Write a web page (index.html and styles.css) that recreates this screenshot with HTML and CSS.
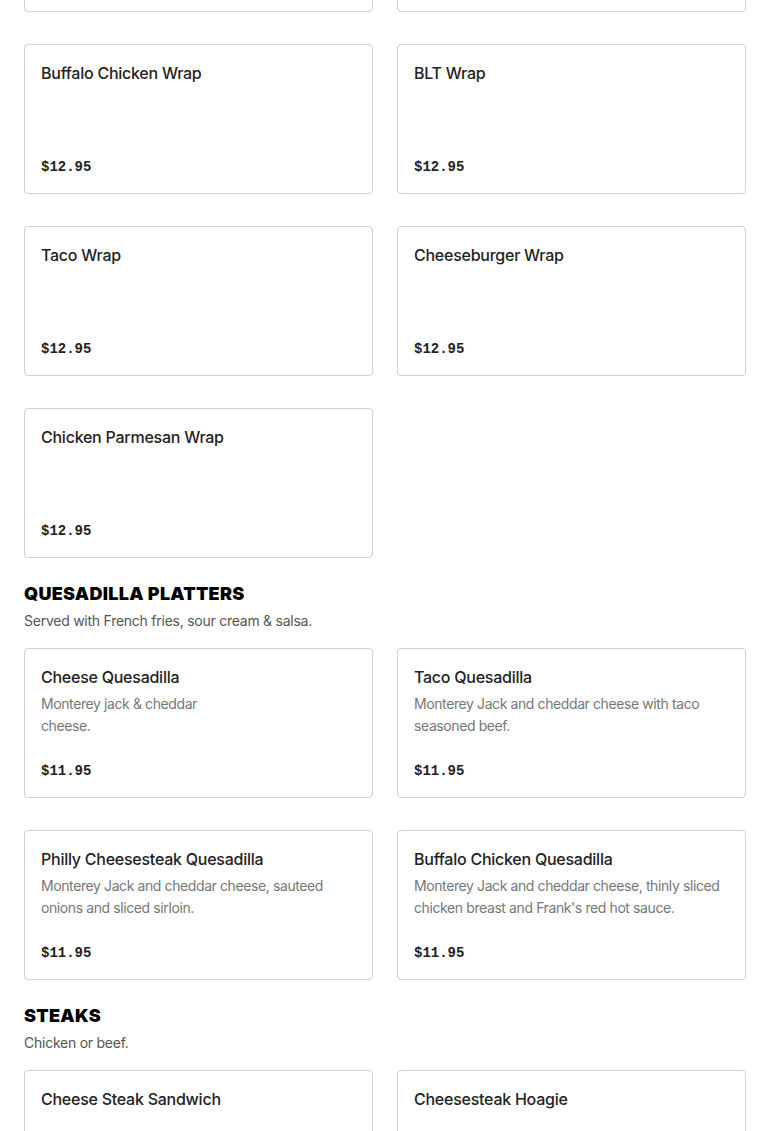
FILE: index.html
```html
<!DOCTYPE html>
<html lang="en">
<head>
<meta charset="utf-8">
<title>Menu</title>
<link rel="stylesheet" href="styles.css">
</head>
<body>
<main class="menu">
  <section class="section section--continued">
    <div class="grid">
      <div class="card card--placeholder" aria-hidden="true"></div>
      <div class="card card--placeholder" aria-hidden="true"></div>
      <article class="card"><h3 class="card-title">Buffalo Chicken Wrap</h3><p class="card-price">$12.95</p></article>
      <article class="card"><h3 class="card-title">BLT Wrap</h3><p class="card-price">$12.95</p></article>
      <article class="card"><h3 class="card-title">Taco Wrap</h3><p class="card-price">$12.95</p></article>
      <article class="card"><h3 class="card-title">Cheeseburger Wrap</h3><p class="card-price">$12.95</p></article>
      <article class="card"><h3 class="card-title">Chicken Parmesan Wrap</h3><p class="card-price">$12.95</p></article>
    </div>
  </section>

  <section class="section">
    <h2 class="section-title">QUESADILLA PLATTERS</h2>
    <p class="section-sub">Served with French fries, sour cream &amp; salsa.</p>
    <div class="grid">
      <article class="card"><h3 class="card-title">Cheese Quesadilla</h3><p class="card-desc card-desc--narrow">Monterey jack &amp; cheddar cheese.</p><p class="card-price">$11.95</p></article>
      <article class="card"><h3 class="card-title">Taco Quesadilla</h3><p class="card-desc">Monterey Jack and cheddar cheese with taco seasoned beef.</p><p class="card-price">$11.95</p></article>
      <article class="card"><h3 class="card-title">Philly Cheesesteak Quesadilla</h3><p class="card-desc">Monterey Jack and cheddar cheese, sauteed onions and sliced sirloin.</p><p class="card-price">$11.95</p></article>
      <article class="card"><h3 class="card-title">Buffalo Chicken Quesadilla</h3><p class="card-desc">Monterey Jack and cheddar cheese, thinly sliced chicken breast and Frank's red hot sauce.</p><p class="card-price">$11.95</p></article>
    </div>
  </section>

  <section class="section">
    <h2 class="section-title">STEAKS</h2>
    <p class="section-sub">Chicken or beef.</p>
    <div class="grid">
      <article class="card"><h3 class="card-title">Cheese Steak Sandwich</h3></article>
      <article class="card"><h3 class="card-title">Cheesesteak Hoagie</h3></article>
    </div>
  </section>
</main>
</body>
</html>
```
FILE: styles.css
```css
* { box-sizing: border-box; }
html, body { margin: 0; padding: 0; background: #fff; }
body {
  font-family: Inter, "Liberation Sans", Arial, sans-serif;
  color: #222;
  overflow: hidden;
}
.menu {
  padding: 0 24px;
  margin-top: -138px;
}
.section { padding-top: 25px; }
.section--continued { padding-top: 0; }
.section-title {
  margin: 0;
  font-family: Inter, "Liberation Sans", sans-serif;
  font-weight: 900;
  font-size: 18px;
  line-height: 22px;
  color: #000;
  letter-spacing: 0.3px;
}
.section-sub {
  margin: 6px 0 17px;
  font-size: 14px;
  line-height: 20px;
  color: #555;
  letter-spacing: -0.25px;
}
.grid {
  display: grid;
  grid-template-columns: 1fr 1fr;
  column-gap: 24px;
  row-gap: 32px;
}
.card {
  display: flex;
  flex-direction: column;
  min-height: 150px;
  padding: 17px 16px 15px;
  border: 1px solid #d0d0d0;
  border-radius: 4px;
  background: #fff;
}
.card-title {
  margin: 0;
  font-size: 16px;
  line-height: 22px;
  font-weight: 500;
  color: #222;
  letter-spacing: -0.25px;
}
.card-desc {
  margin: 5px 0 0;
  font-size: 14px;
  line-height: 22px;
  color: #777;
  letter-spacing: -0.4px;
}
.card-desc--narrow { max-width: 170px; }
.card-price {
  margin: auto 0 0;
  padding-top: 22px;
  font-family: "Liberation Mono", "DejaVu Sans Mono", monospace;
  font-weight: 700;
  font-size: 14px;
  line-height: 22px;
  color: #222;
}
```
